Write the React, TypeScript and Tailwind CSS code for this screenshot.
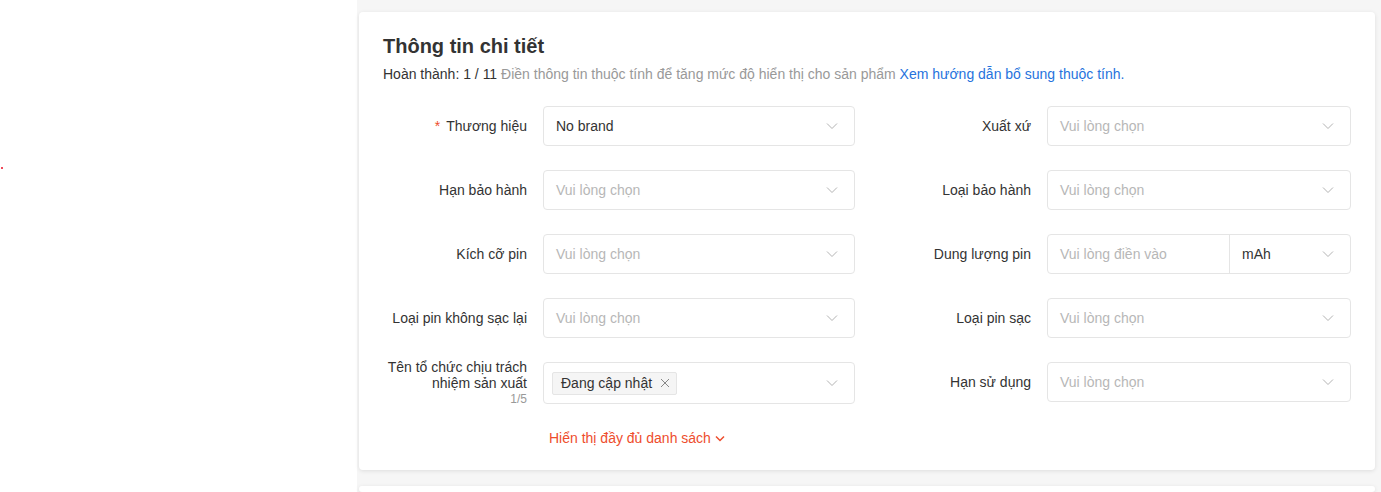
import React from "react";

const Chevron = ({ className = "" }: { className?: string }) => (
  <svg width="12" height="8" viewBox="0 0 12 8" className={className} fill="none">
    <path d="M1 1.5 L6 6.5 L11 1.5" stroke="currentColor" strokeWidth="1" />
  </svg>
);

const Select = ({ value, placeholder }: { value?: string; placeholder?: string }) => (
  <div className="flex h-10 flex-1 items-center justify-between rounded-[4px] border border-[#e5e5e5] bg-white pl-3 pr-4">
    {value ? (
      <span className="text-[#333]">{value}</span>
    ) : (
      <span className="text-[#b7b7b7]">{placeholder}</span>
    )}
    <Chevron className="text-[#b3b3b3]" />
  </div>
);

const Label = ({ children, w }: { children: React.ReactNode; w: string }) => (
  <div className={`${w} shrink-0 text-right text-[#333]`}>{children}</div>
);

export default function App() {
  return (
    <div
      className="flex h-[492px] w-[1381px] overflow-hidden bg-white text-sm leading-5"
      style={{ fontFamily: '"Liberation Sans", Arial, sans-serif' }}
    >
      <div className="relative w-[357px] shrink-0">
        <div className="absolute left-[1px] top-[167px] h-[2px] w-[2px] bg-[#f04a5a]" />
      </div>
      <div className="flex flex-1 flex-col bg-[#f6f6f6] pl-[2px] pr-[6px] pt-3">
        <div className="rounded-[4px] bg-white px-6 pb-[22px] pt-5 shadow-[0_1px_4px_rgba(0,0,0,0.10)]">
          <div className="text-[20px] font-bold leading-7 text-[#333]">Thông tin chi tiết</div>
          <div className="mt-1 text-[#999]">
            <span className="text-[#333]">Hoàn thành: 1 / 11</span> Điền thông tin thuộc tính để tăng mức độ hiển thị cho sản phẩm{" "}
            <span className="text-[#2673dd]">Xem hướng dẫn bổ sung thuộc tính.</span>
          </div>

          <div className="mt-[22px] grid grid-cols-2 gap-x-6 gap-y-6">
            {/* Row 1 */}
            <div className="flex items-center gap-4">
              <Label w="w-[144px]">
                <span className="mr-[6px] text-[#ee4d2d]">*</span>Thương hiệu
              </Label>
              <Select value="No brand" />
            </div>
            <div className="flex items-center gap-4">
              <Label w="w-[152px]">Xuất xứ</Label>
              <Select placeholder="Vui lòng chọn" />
            </div>

            {/* Row 2 */}
            <div className="flex items-center gap-4">
              <Label w="w-[144px]">Hạn bảo hành</Label>
              <Select placeholder="Vui lòng chọn" />
            </div>
            <div className="flex items-center gap-4">
              <Label w="w-[152px]">Loại bảo hành</Label>
              <Select placeholder="Vui lòng chọn" />
            </div>

            {/* Row 3 */}
            <div className="flex items-center gap-4">
              <Label w="w-[144px]">Kích cỡ pin</Label>
              <Select placeholder="Vui lòng chọn" />
            </div>
            <div className="flex items-center gap-4">
              <Label w="w-[152px]">Dung lượng pin</Label>
              <div className="flex h-10 flex-1 rounded-[4px] border border-[#e5e5e5] bg-white">
                <div className="flex w-[182px] items-center border-r border-[#e5e5e5] pl-3 text-[#b7b7b7]">
                  Vui lòng điền vào
                </div>
                <div className="flex flex-1 items-center justify-between pl-3 pr-4 text-[#333]">
                  <span>mAh</span>
                  <Chevron className="text-[#b3b3b3]" />
                </div>
              </div>
            </div>

            {/* Row 4 */}
            <div className="flex items-center gap-4">
              <Label w="w-[144px]">Loại pin không sạc lại</Label>
              <Select placeholder="Vui lòng chọn" />
            </div>
            <div className="flex items-center gap-4">
              <Label w="w-[152px]">Loại pin sạc</Label>
              <Select placeholder="Vui lòng chọn" />
            </div>

            {/* Row 5 */}
            <div className="flex items-start gap-4">
              <div className="-mb-[3px] -mt-[3px] w-[144px] shrink-0 text-right leading-4 text-[#333]">
                <div>Tên tổ chức chịu trách</div>
                <div>nhiệm sản xuất</div>
                <div className="text-xs leading-4 text-[#999]">1/5</div>
              </div>
              <div className="flex h-[42px] flex-1 items-center justify-between rounded-[4px] border border-[#e5e5e5] bg-white pl-2 pr-4">
                <div className="flex h-[23px] items-center gap-2 rounded-[2px] border border-[#e5e5e5] bg-[#f5f5f5] pl-2 pr-[6px] text-[#333]">
                  <span>Đang cập nhật</span>
                  <svg width="10" height="10" viewBox="0 0 10 10" fill="none" className="text-[#888]">
                    <path d="M1 1 L9 9 M9 1 L1 9" stroke="currentColor" strokeWidth="1" />
                  </svg>
                </div>
                <Chevron className="text-[#b3b3b3]" />
              </div>
            </div>
            <div className="flex items-center gap-4 self-start">
              <Label w="w-[152px]">Hạn sử dụng</Label>
              <Select placeholder="Vui lòng chọn" />
            </div>
          </div>

          <div className="mt-6 flex items-center gap-1 pl-[166px] text-[#ee4d2d]">
            <span>Hiển thị đầy đủ danh sách</span>
            <svg width="10" height="7" viewBox="0 0 10 7" fill="none">
              <path d="M1 1.5 L5 5.5 L9 1.5" stroke="currentColor" strokeWidth="1.5" />
            </svg>
          </div>
        </div>
        <div className="mt-4 h-[40px] rounded-[4px] bg-white shadow-[0_1px_4px_rgba(0,0,0,0.10)]" />
      </div>
    </div>
  );
}
